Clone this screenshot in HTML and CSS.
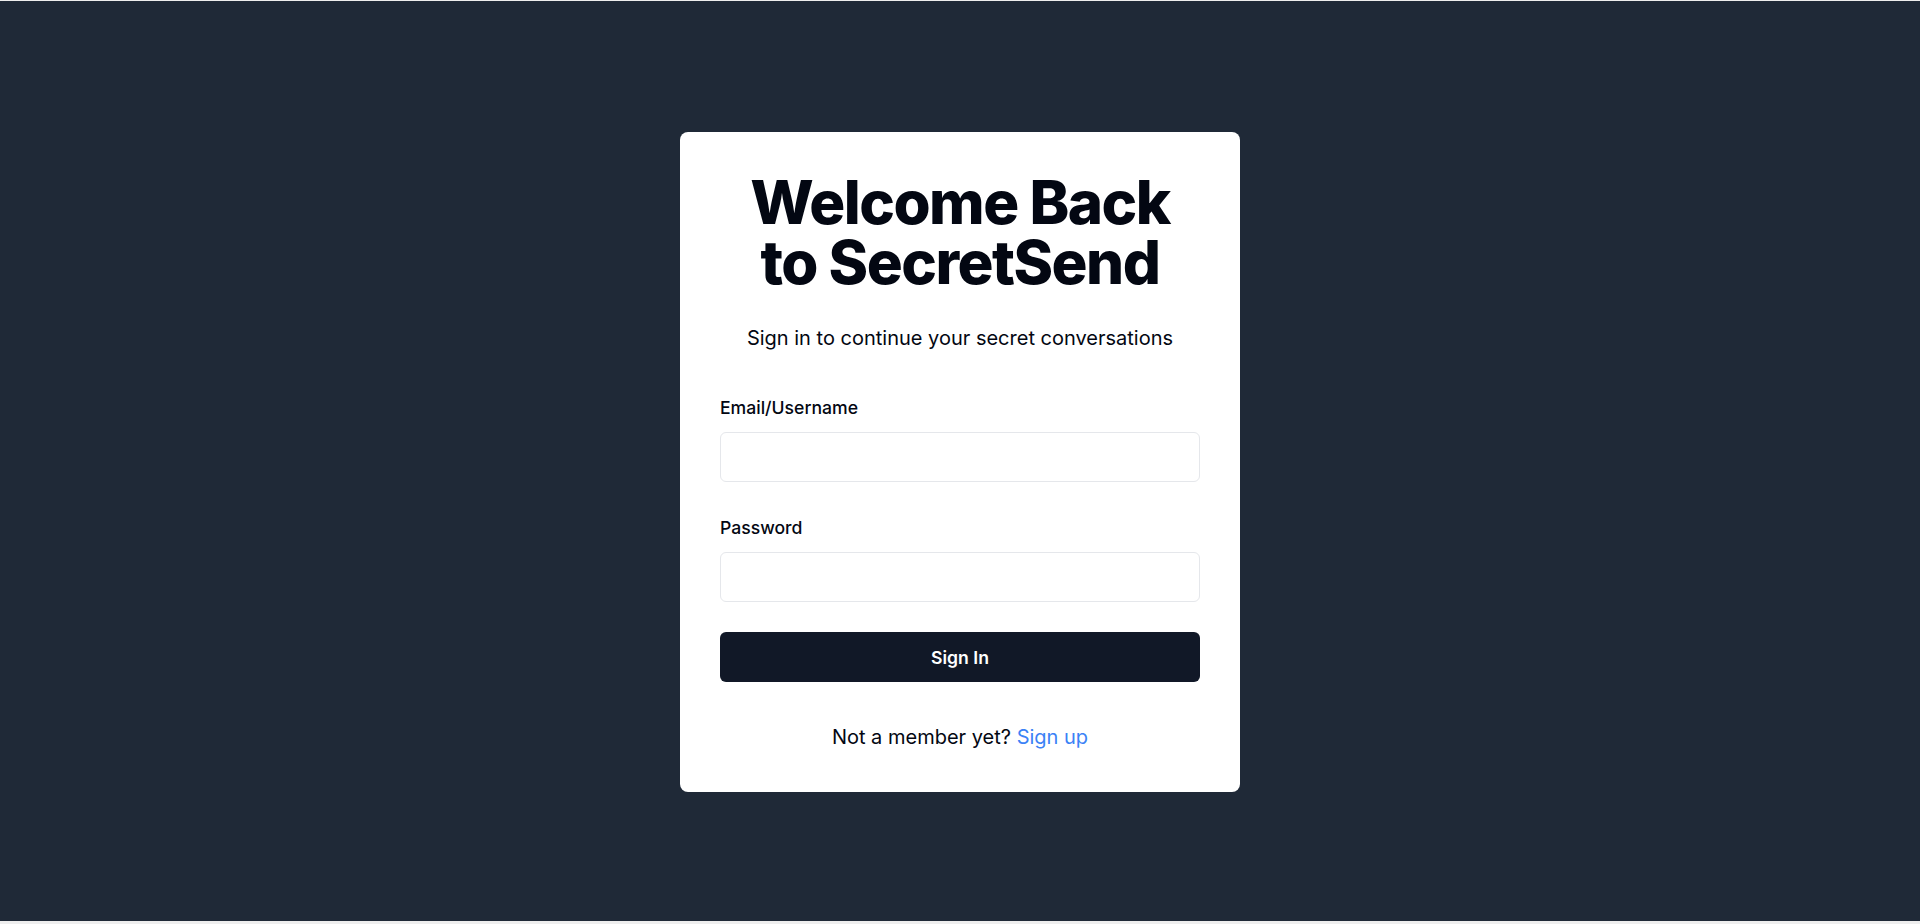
FILE: index.html
```html
<!DOCTYPE html>
<html lang="en">
<head>
<meta charset="utf-8">
<title>SecretSend - Sign In</title>
<link rel="stylesheet" href="styles.css">
</head>
<body>
<main class="screen">
  <section class="card">
    <h1 class="title">Welcome Back to SecretSend</h1>
    <p class="subtitle">Sign in to continue your secret conversations</p>
    <form class="form">
      <div class="field">
        <label class="label" for="email">Email/Username</label>
        <input class="input" id="email" type="text">
      </div>
      <div class="field">
        <label class="label" for="password">Password</label>
        <input class="input" id="password" type="password">
      </div>
      <button class="button" type="button">Sign In</button>
    </form>
    <p class="footer">Not a member yet? <a class="link" href="#">Sign up</a></p>
  </section>
</main>
</body>
</html>
```

FILE: styles.css
```css
* { box-sizing: border-box; }
html, body { margin: 0; padding: 0; }
body {
  background: #eeeeee;
  font-family: Inter, "Noto Sans", sans-serif;
  height: 924px;
  overflow: hidden;
}
.screen {
  margin-top: 1px;
  height: 920px;
  background: #1f2937;
  display: flex;
  justify-content: center;
  padding-top: 131px;
}
.card {
  width: 560px;
  height: 660px;
  background: #ffffff;
  border-radius: 8px;
  padding: 40px;
  display: flex;
  flex-direction: column;
  align-items: stretch;
}
.title {
  margin: 0;
  font-size: 60px;
  line-height: 60px;
  font-weight: 800;
  letter-spacing: -1.5px;
  color: #030712;
  text-align: center;
  padding: 0 30px;
}
.subtitle {
  margin: 32px 0 0;
  font-size: 20px;
  line-height: 28px;
  color: #030712;
  text-align: center;
}
.form {
  margin-top: 44px;
  display: flex;
  flex-direction: column;
}
.field {
  display: flex;
  flex-direction: column;
  margin-bottom: 34px;
}
.field + .field { margin-bottom: 30px; }
.label {
  font-size: 17.6px;
  line-height: 24px;
  font-weight: 500;
  color: #030712;
  margin-bottom: 12px;
}
.input {
  height: 50px;
  border: 1px solid #e5e7eb;
  border-radius: 6px;
  background: #ffffff;
  font: inherit;
  padding: 0 12px;
  outline: none;
}
.button {
  height: 50px;
  border: 0;
  border-radius: 6px;
  background: #111827;
  color: #ffffff;
  font-family: inherit;
  font-size: 17.6px;
  font-weight: 600;
  cursor: pointer;
}
.footer {
  margin: 41px 0 0;
  font-size: 20px;
  line-height: 28px;
  color: #030712;
  text-align: center;
}
.link {
  color: #3b82f6;
  text-decoration: none;
}
```
